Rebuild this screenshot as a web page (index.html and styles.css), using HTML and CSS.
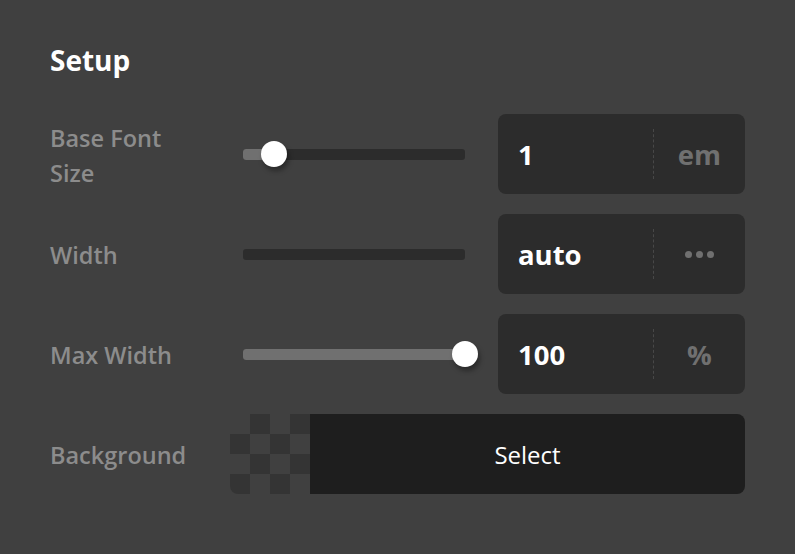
FILE: index.html
```html
<!DOCTYPE html>
<html>
<head>
<meta charset="utf-8">
<link rel="stylesheet" href="styles.css">
</head>
<body>
<div class="panel">
  <h1 class="title">Setup</h1>
  <div class="rows">
    <div class="label">Base Font<br>Size</div>
    <div class="slider"><div class="track"><div class="fill" style="width:14%"></div><div class="thumb" style="left:14%"></div></div></div>
    <div class="field"><span class="value">1</span><span class="unit">em</span></div>

    <div class="label">Width</div>
    <div class="slider"><div class="track"></div></div>
    <div class="field"><span class="value">auto</span><span class="unit dots"><i></i><i></i><i></i></span></div>

    <div class="label">Max Width</div>
    <div class="slider"><div class="track"><div class="fill" style="width:100%"></div><div class="thumb" style="left:100%"></div></div></div>
    <div class="field"><span class="value">100</span><span class="unit">%</span></div>

    <div class="label">Background</div>
    <div class="bg-select">
      <div class="checker">
        <i></i><i class="d"></i><i></i><i class="d"></i>
        <i class="d"></i><i></i><i class="d"></i><i></i>
        <i></i><i class="d"></i><i></i><i class="d"></i>
        <i class="d"></i><i></i><i class="d"></i><i></i>
      </div>
      <div class="select-btn">Select</div>
    </div>
  </div>
</div>
</body>
</html>
```

FILE: styles.css
```css
html, body {
  margin: 0;
  background: #404040;
  font-family: "Open Sans", "Noto Sans", sans-serif;
}
.panel {
  padding: 40px 50px 0 50px;
}
.title {
  margin: 0 0 34px 0;
  font-size: 28px;
  font-weight: 700;
  line-height: 40px;
  color: #ffffff;
}
.rows {
  display: grid;
  grid-template-columns: 180px 1fr 247px;
  grid-auto-rows: 80px;
  row-gap: 20px;
}
.label {
  align-self: center;
  color: #8c8c8c;
  font-size: 23.5px;
  font-weight: 600;
  line-height: 35px;
  padding-top: 3px;
}
.slider {
  display: flex;
  align-items: center;
  padding: 0 33px 0 13px;
}
.track {
  position: relative;
  flex: 1;
  height: 11px;
  border-radius: 3px;
  background: #2c2c2c;
}
.fill {
  height: 100%;
  border-radius: 3px;
  background: #707070;
}
.thumb {
  position: absolute;
  top: 50%;
  width: 26px;
  height: 26px;
  margin: -13px 0 0 -13px;
  border-radius: 50%;
  background: #ffffff;
  box-shadow: 2px 4px 5px rgba(0, 0, 0, 0.35);
}
.field {
  display: flex;
  align-items: center;
  background: #2c2c2c;
  border-radius: 8px;
  padding: 15px 0;
  box-sizing: border-box;
}
.value {
  width: 135px;
  padding-left: 20px;
  color: #ffffff;
  font-size: 27.5px;
  font-weight: 700;
}
.unit {
  align-self: stretch;
  flex: 1;
  display: flex;
  align-items: center;
  justify-content: center;
  border-left: 1px dashed #484848;
  color: #707070;
  font-size: 27.5px;
  font-weight: 700;
}
.dots {
  gap: 4px;
}
.dots i {
  width: 7px;
  height: 7px;
  border-radius: 50%;
  background: #707070;
}
.bg-select {
  grid-column: 2 / 4;
  display: flex;
}
.checker {
  width: 80px;
  height: 80px;
  display: grid;
  grid-template-columns: repeat(4, 20px);
  grid-template-rows: repeat(4, 20px);
  border-radius: 8px 0 0 8px;
  overflow: hidden;
}
.checker .d {
  background: #343434;
}
.select-btn {
  flex: 1;
  display: flex;
  align-items: center;
  justify-content: center;
  background: #1e1e1e;
  border-radius: 0 8px 8px 0;
  color: #ffffff;
  font-size: 24px;
}
```
